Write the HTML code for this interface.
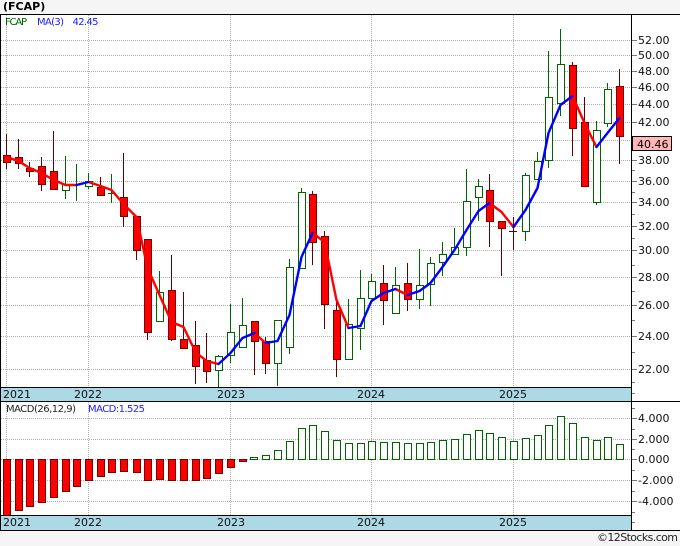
<!DOCTYPE html>
<html><head><meta charset="utf-8"><title>FCAP</title>
<style>html,body{margin:0;padding:0;background:#f5f5f5;width:680px;height:546px;overflow:hidden}svg{display:block}text{font-family:"DejaVu Sans","Liberation Sans",sans-serif}</style>
</head><body>
<svg xmlns="http://www.w3.org/2000/svg" width="680" height="546" viewBox="0 0 680 546">
<rect width="680" height="546" fill="#f5f5f5"/>
<rect x="0" y="14" width="680" height="517" fill="#fff"/>
<rect x="1" y="387" width="630" height="14" fill="#add8e6"/>
<rect x="1" y="515" width="630" height="15" fill="#add8e6"/>
<g shape-rendering="crispEdges">
<g stroke="#adadad" stroke-dasharray="1 1" fill="none">
<path d="M1 40.5H632M1 55.5H632M1 71.5H632M1 87.5H632M1 104.5H632M1 122.5H632M1 140.5H632M1 160.5H632M1 181.5H632M1 202.5H632M1 226.5H632M1 250.5H632M1 277.5H632M1 305.5H632M1 336.5H632M1 369.5H632"/>
<path d="M1 418.5H632M1 439.5H632M1 459.5H632M1 480.5H632M1 501.5H632"/>
<path d="M6.5 15V387M88.5 15V387M230.5 15V387M371.5 15V387M513.5 15V387M6.5 402V515M88.5 402V515M230.5 402V515M371.5 402V515M513.5 402V515"/>
</g>
<path fill="none" stroke="#777" d="M632 40.5h5M632 55.5h5M632 71.5h5M632 87.5h5M632 104.5h5M632 122.5h5M632 160.5h5M632 181.5h5M632 202.5h5M632 226.5h5M632 250.5h5M632 277.5h5M632 305.5h5M632 336.5h5M632 369.5h5M632 170.5h3M632 192.5h3M632 214.5h3M632 238.5h3M632 265.5h3M632 291.5h3M632 320.5h3M632 352.5h3M632 382.5h3M632 393.5h3M632 418.5h5M632 439.5h5M632 459.5h5M632 480.5h5M632 501.5h5M632 408.5h3M632 429.5h3M632 449.5h3M632 470.5h3M632 491.5h3M632 512.5h3M632 522.5h3"/>
<path fill="none" stroke="#600000" d="M6.5 134V169M18.5 139V169M29.5 162V177M41.5 157V191M53.5 131V190M100.5 177V191M123.5 153V227M136.5 216V260M147.5 239V340M171.5 255V341M183.5 292V348M195.5 321V384M206.5 333V383M254.5 321V375M265.5 337V374M312.5 191V265M324.5 231V329M336.5 302V377M383.5 265V325M407.5 263V311M489.5 174V247M501.5 221V276M513.5 217V250M509 231.5h8M572.5 62V156M584.5 97V186M619.5 69V164M73 184.5h8"/>
<path fill="none" stroke="#006400" d="M65.5 156V199M76.5 164V201M88.5 173V189M111.5 174V203M159.5 271V321M218.5 355V387M230.5 304V363M242.5 298V347M277.5 320V386M289.5 259V354M301.5 188V268M348.5 299V359M360.5 270V350M371.5 274V298M395.5 267V313M419.5 249V309M430.5 257V306M442.5 242V276M454.5 228V254M466.5 169V256M478.5 179V221M525.5 173V241M537.5 152V179M548.5 51V168M560.5 29V116M596.5 121V205M607.5 83V127M108 193.5h8"/>
<path fill="#f00" stroke="#7a0000" d="M3.5 155.5h7v7h-7zM15.5 157.5h7v6h-7zM26.5 168.5h7v3h-7zM38.5 166.5h7v18h-7zM50.5 171.5h7v18h-7zM97.5 187.5h7v8h-7zM120.5 197.5h7v19h-7zM133.5 216.5h7v34h-7zM144.5 239.5h7v93h-7zM168.5 290.5h7v49h-7zM180.5 339.5h7v9h-7zM192.5 345.5h7v21h-7zM203.5 360.5h7v11h-7zM251.5 321.5h7v20h-7zM262.5 341.5h7v22h-7zM309.5 194.5h7v48h-7zM321.5 236.5h7v68h-7zM333.5 310.5h7v49h-7zM380.5 283.5h7v17h-7zM404.5 283.5h7v16h-7zM486.5 190.5h7v31h-7zM498.5 221.5h7v7h-7zM569.5 65.5h7v63h-7zM581.5 122.5h7v64h-7zM616.5 86.5h7v50h-7z"/>
<path fill="#fff" stroke="#006400" d="M62.5 184.5h7v6h-7zM85.5 181.5h7v5h-7zM156.5 292.5h7v29h-7zM215.5 356.5h7v14h-7zM227.5 332.5h7v23h-7zM239.5 325.5h7v22h-7zM274.5 320.5h7v43h-7zM286.5 267.5h7v80h-7zM298.5 192.5h7v76h-7zM345.5 324.5h7v35h-7zM357.5 298.5h7v30h-7zM368.5 281.5h7v17h-7zM392.5 285.5h7v28h-7zM416.5 285.5h7v14h-7zM427.5 263.5h7v21h-7zM439.5 254.5h7v8h-7zM451.5 247.5h7v7h-7zM463.5 201.5h7v46h-7zM475.5 186.5h7v11h-7zM522.5 175.5h7v56h-7zM534.5 161.5h7v18h-7zM545.5 97.5h7v63h-7zM557.5 64.5h7v39h-7zM593.5 130.5h7v72h-7zM604.5 89.5h7v34h-7z"/>
<path fill="#f00" stroke="#7a0000" d="M3.5 459.5h7v56h-7zM15.5 459.5h7v51h-7zM26.5 459.5h7v47h-7zM38.5 459.5h7v43h-7zM50.5 459.5h7v38h-7zM62.5 459.5h7v32h-7zM73.5 459.5h7v27h-7zM85.5 459.5h7v21h-7zM97.5 459.5h7v17h-7zM108.5 459.5h7v13h-7zM120.5 459.5h7v12h-7zM133.5 459.5h7v13h-7zM144.5 459.5h7v21h-7zM156.5 459.5h7v20h-7zM168.5 459.5h7v21h-7zM180.5 459.5h7v21h-7zM192.5 459.5h7v21h-7zM203.5 459.5h7v19h-7zM215.5 459.5h7v14h-7zM227.5 459.5h7v8h-7zM239.5 459.5h7v2h-7z"/>
<path fill="#fff" stroke="#006400" d="M250.5 457.5h7v2h-7zM262.5 455.5h7v4h-7zM274.5 450.5h7v9h-7zM286.5 441.5h7v18h-7zM298.5 428.5h7v31h-7zM309.5 425.5h7v34h-7zM321.5 431.5h7v28h-7zM333.5 440.5h7v19h-7zM345.5 443.5h7v16h-7zM357.5 443.5h7v16h-7zM368.5 441.5h7v18h-7zM380.5 442.5h7v17h-7zM392.5 442.5h7v17h-7zM404.5 443.5h7v16h-7zM416.5 443.5h7v16h-7zM427.5 442.5h7v17h-7zM439.5 440.5h7v19h-7zM451.5 439.5h7v20h-7zM463.5 434.5h7v25h-7zM475.5 430.5h7v29h-7zM486.5 433.5h7v26h-7zM498.5 437.5h7v22h-7zM510.5 441.5h7v18h-7zM522.5 438.5h7v21h-7zM534.5 435.5h7v24h-7zM545.5 425.5h7v34h-7zM557.5 416.5h7v43h-7zM569.5 423.5h7v36h-7zM581.5 437.5h7v22h-7zM593.5 440.5h7v19h-7zM604.5 437.5h7v22h-7zM616.5 444.5h7v15h-7z"/>
</g>
<g fill="none" stroke-width="2.4" stroke-linejoin="round" stroke-linecap="round" transform="translate(-0.5,0)">
<path stroke="#f00" d="M7 157L19 161 30 168 42 173 54 180 66 185 77 185M89 182L101 186 112 190 124 204 137 217 148 268 160 295 172 322 184 327 196 352 207 361 219 364M255 333L266 343M313 233L325 242 337 300 349 328M396 289L408 295M490 203L502 212 514 227M573 96L585 123 597 147"/>
<path stroke="#00f" d="M77 185L89 182M219 364L231 353 243 338 255 333M266 343L278 341 290 315 302 257 313 233M349 328L361 326 372 301 384 293 396 289M408 295L420 291 431 283 443 267 455 250 467 230 479 211 490 203M514 227L526 210 538 188 549 133 561 105 573 96M597 147L608 133 620 118"/>
</g>
<g shape-rendering="crispEdges" fill="#000">
<rect x="0" y="14" width="680" height="1"/>
<rect x="0" y="14" width="1" height="517"/>
<rect x="631" y="14" width="1" height="517"/>
<rect x="0" y="387" width="632" height="1"/>
<rect x="0" y="401" width="680" height="1"/>
<rect x="0" y="515" width="632" height="1"/>
<rect x="0" y="530" width="680" height="1"/>
<rect x="632" y="136" width="40" height="15" fill="#ffb6b6"/>
<rect x="632.5" y="136.5" width="39" height="14" fill="none" stroke="#000"/>
</g>
<text x="3" y="10" font-size="11" font-weight="bold" fill="#000">(FCAP)</text>
<g font-size="10">
<text x="5" y="25" fill="#006400" textLength="22">FCAP</text>
<text x="37" y="25" fill="#2020ff" textLength="27">MA(3)</text>
<text x="72.5" y="25" fill="#2020ff" textLength="26">42.45</text>
<text x="6" y="412" fill="#222" textLength="70">MACD(26,12,9)</text>
<text x="88" y="412" fill="#2020ff" textLength="57">MACD:1.525</text>
</g>
<g font-size="11" fill="#111">
<text x="638" y="44">52.00</text>
<text x="638" y="59">50.00</text>
<text x="638" y="75">48.00</text>
<text x="638" y="91">46.00</text>
<text x="638" y="108">44.00</text>
<text x="638" y="126">42.00</text>
<text x="637" y="148" fill="#000">40.46</text>
<text x="638" y="164">38.00</text>
<text x="638" y="185">36.00</text>
<text x="638" y="206">34.00</text>
<text x="638" y="230">32.00</text>
<text x="638" y="254">30.00</text>
<text x="638" y="281">28.00</text>
<text x="638" y="309">26.00</text>
<text x="638" y="340">24.00</text>
<text x="638" y="373">22.00</text>
<text x="638" y="422">4.000</text>
<text x="638" y="443">2.000</text>
<text x="638" y="463">0.000</text>
<text x="638" y="484">-2.000</text>
<text x="638" y="505">-4.000</text>
<text x="3" y="398">2021</text>
<text x="74" y="398">2022</text>
<text x="217" y="398">2023</text>
<text x="357" y="398">2024</text>
<text x="499" y="398">2025</text>
<text x="3" y="526">2021</text>
<text x="74" y="526">2022</text>
<text x="217" y="526">2023</text>
<text x="357" y="526">2024</text>
<text x="499" y="526">2025</text>
</g>
<text x="597" y="541" font-size="11" fill="#222" textLength="81">©12Stocks.com</text>
</svg>
</body></html>
